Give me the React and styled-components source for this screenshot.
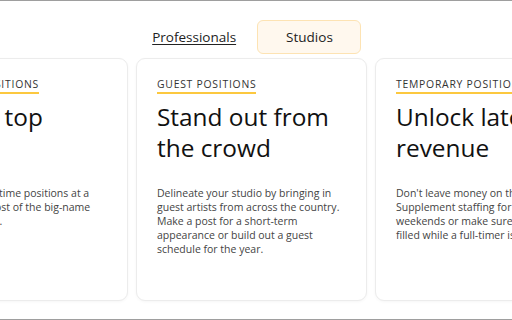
import React from "react";
import styled, { createGlobalStyle } from "styled-components";

const Global = createGlobalStyle`
  html, body { margin: 0; padding: 0; background: #fff; }
  body { font-family: "Open Sans", "Liberation Sans", sans-serif; color: #1a1a1a; }
  * { box-sizing: border-box; }
`;

const Frame = styled.div`
  width: 512px;
  height: 320px;
  overflow: hidden;
  border-top: 1px solid #9e9e9e;
  border-bottom: 1px solid #9e9e9e;
  display: flex;
  flex-direction: column;
`;

const Tabs = styled.nav`
  display: flex;
  justify-content: center;
  align-items: stretch;
  gap: 20px;
  margin-top: 19px;
  height: 34px;
`;

const Tab = styled.button`
  font-family: inherit;
  font-size: 13.5px;
  font-weight: 500;
  color: #222;
  cursor: pointer;
  border-radius: 6px;
  padding: ${(p) => (p.$active ? "0 27px 0 28px" : "0")};
  background: ${(p) => (p.$active ? "#fff8ee" : "transparent")};
  border: 1px solid ${(p) => (p.$active ? "#fde3b3" : "transparent")};
  text-decoration: ${(p) => (p.$active ? "none" : "underline")};
  text-underline-offset: 2px;
  text-decoration-thickness: 1px;
`;

const Track = styled.div`
  display: flex;
  gap: 8px;
  margin-top: 4px;
  margin-left: -103px;
`;

const Card = styled.article`
  flex: 0 0 231px;
  height: 243px;
  background: #fff;
  border: 1px solid #ececec;
  border-radius: 9px;
  box-shadow: 0 1px 3px rgba(0, 0, 0, 0.04);
  padding: 18px 20px 0 20px;
  display: flex;
  flex-direction: column;
  align-items: flex-start;
`;

const Label = styled.span`
  display: inline-block;
  font-size: 10.4px;
  line-height: 14px;
  font-weight: 500;
  letter-spacing: 0.75px;
  text-transform: uppercase;
  color: #333;
  padding-bottom: 1px;
  border-bottom: 2px solid #fcc83f;
  white-space: nowrap;
`;

const Heading = styled.h2`
  margin: 7px 0 0 0;
  font-size: 24.4px;
  line-height: 31px;
  font-weight: 500;
  color: #111;
`;

const Body = styled.p`
  margin: 23px 0 0 0;
  font-size: 10.5px;
  line-height: 14px;
  color: #444;
`;

const cards = [
  {
    label: "Full-time positions",
    title: "Recruit top talent",
    body: "Advertise all full-time positions at a fraction of the cost of the big-name staffing agencies.",
  },
  {
    label: "Guest positions",
    title: "Stand out from the crowd",
    body: "Delineate your studio by bringing in guest artists from across the country. Make a post for a short-term appearance or build out a guest schedule for the year.",
  },
  {
    label: "Temporary positions",
    title: "Unlock latent revenue",
    body: "Don't leave money on the table. Supplement staffing for busy weekends or make sure chairs are filled while a full-timer is away.",
  },
];

export default function App() {
  return (
    <>
      <Global />
      <Frame>
        <Tabs>
          <Tab>Professionals</Tab>
          <Tab $active>Studios</Tab>
        </Tabs>
        <Track>
          {cards.map((c) => (
            <Card key={c.label}>
              <Label>{c.label}</Label>
              <Heading>{c.title}</Heading>
              <Body>{c.body}</Body>
            </Card>
          ))}
        </Track>
      </Frame>
    </>
  );
}
